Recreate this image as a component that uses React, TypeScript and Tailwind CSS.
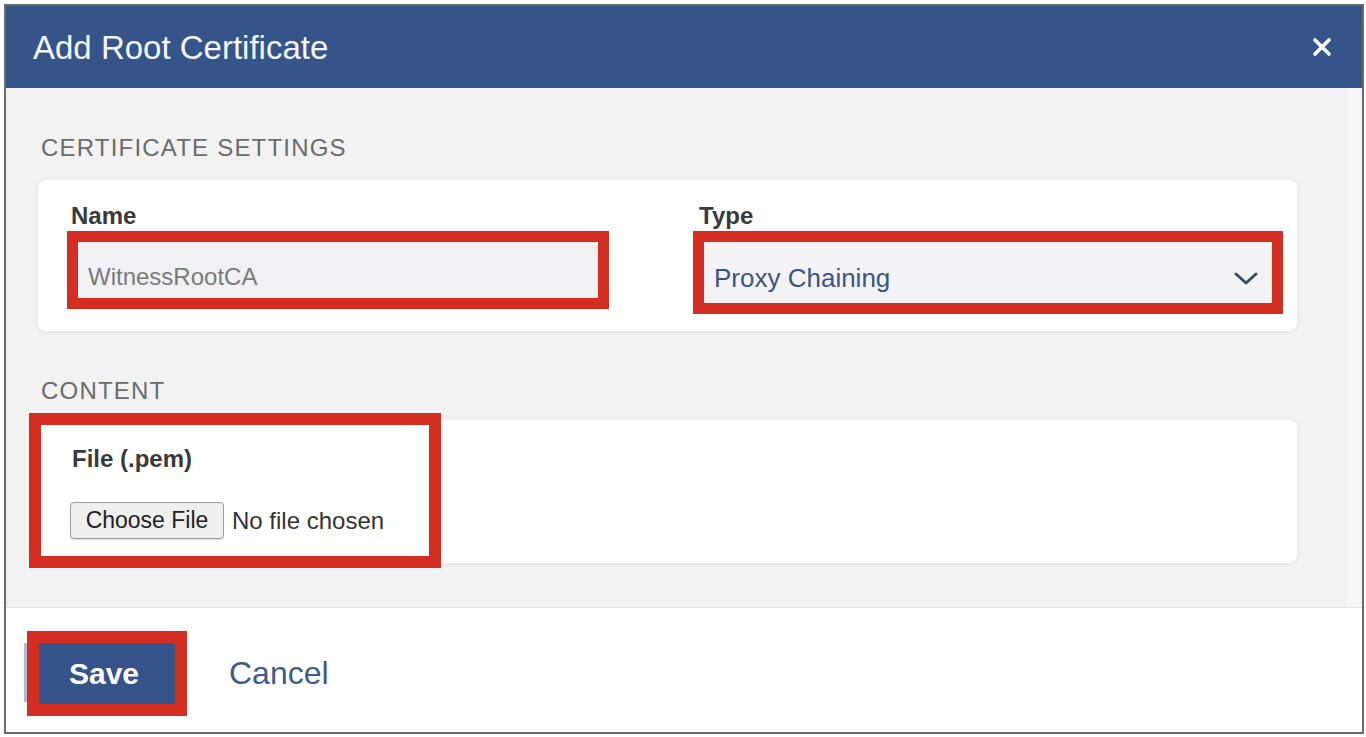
import React from "react"

const font = { fontFamily: '"Liberation Sans", Arial, sans-serif' }

function CloseIcon() {
  return (
    <svg width="20" height="20" viewBox="0 0 20 20" fill="none">
      <path d="M3 3 L17 17 M17 3 L3 17" stroke="white" strokeWidth="3.6" strokeLinecap="round" />
    </svg>
  )
}

function Chevron() {
  return (
    <svg width="24" height="14" viewBox="0 0 24 14" fill="none">
      <path d="M2 2 L12 11 L22 2" stroke="#3b4a66" strokeWidth="3" strokeLinecap="round" strokeLinejoin="round" />
    </svg>
  )
}

export default function App() {
  return (
    <div className="w-full h-[737px] bg-white pl-[4px] pt-[4px]" style={font}>
      <div className="w-[1360px] h-[730px] border-2 border-[#6b6b6b] flex flex-col bg-white overflow-hidden">
        {/* header */}
        <div className="h-[82px] shrink-0 bg-[#34548a] flex items-center justify-between pl-[27px] pr-[30px]">
          <h1 className="text-[33px] leading-none text-[#f4f6fa]">Add Root Certificate</h1>
          <CloseIcon />
        </div>

        {/* body */}
        <div className="h-[520px] shrink-0 bg-[#f2f2f3] flex border-b border-[#e4e4e6]">
          <div className="flex-1 pt-[48px] pl-[32px]">
            <div className="pl-[3px] text-[24px] leading-none tracking-[1.2px] text-[#6b6b6b]">
              CERTIFICATE SETTINGS
            </div>

            <div className="mt-[20px] w-[1259px] h-[151px] bg-white rounded-lg shadow-[0_1px_6px_rgba(0,0,0,0.08)] pt-[24px] pl-[29px] flex gap-[84px]">
              <div className="flex flex-col">
                <label className="pl-[4px] text-[24px] leading-none font-bold text-[#3a3a3a]">Name</label>
                <div className="mt-[3px] w-[542px] h-[78px] border-[11px] border-[#d42e22] bg-[#f1f1f3] flex items-center pl-[10px] pt-[14px]">
                  <span className="text-[24px] text-[#7a7a7a]">WitnessRootCA</span>
                </div>
              </div>
              <div className="flex flex-col">
                <label className="pl-[6px] text-[24px] leading-none font-bold text-[#3a3a3a]">Type</label>
                <div className="mt-[3px] w-[590px] h-[83px] border-[11px] border-[#d42e22] bg-[#f3f3f6] flex items-center justify-between pl-[10px] pr-[14px] pt-[12px]">
                  <span className="text-[26px] text-[#3e5580]">Proxy Chaining</span>
                  <Chevron />
                </div>
              </div>
            </div>

            <div className="mt-[48px] pl-[3px] text-[24px] leading-none tracking-[1.2px] text-[#6b6b6b]">CONTENT</div>

            <div className="relative mt-[17px] w-[1259px] h-[143px] bg-white rounded-lg shadow-[0_1px_6px_rgba(0,0,0,0.08)] pt-[27px] pl-[34px]">
              <label className="block text-[24px] leading-none font-bold text-[#3a3a3a]">File (.pem)</label>
              <div className="mt-[31px] -ml-[2px] flex items-center gap-[8px]">
                <button className="w-[154px] h-[37px] bg-[#efefef] border border-[#9d9d9d] rounded-[4px] shadow-[0_1px_1px_rgba(0,0,0,0.15)] text-[23px] text-[#222]">
                  Choose File
                </button>
                <span className="text-[24px] text-[#333]">No file chosen</span>
              </div>
              {/* highlight annotation */}
              <div className="absolute -left-[9px] -top-[7px] w-[412px] h-[155px] border-[12px] border-[#d42e22] pointer-events-none" />
            </div>
          </div>
          <div className="w-[15px] bg-[#f6f6f7]" />
        </div>

        {/* footer */}
        <div className="flex-1 bg-white flex items-start pt-[23px] pl-[18px]">
          <div className="flex">
            <div className="w-[3px] mt-[12px] h-[59px] bg-[#a9bcd8]" />
            <button className="w-[160px] h-[85px] border-[12px] border-[#d42e22] bg-[#34548a] text-white text-[30px] font-bold pr-[6px]">
              Save
            </button>
          </div>
          <span className="ml-[42px] mt-[26px] text-[32px] leading-none text-[#3c5a8c]">Cancel</span>
        </div>
      </div>
    </div>
  )
}
